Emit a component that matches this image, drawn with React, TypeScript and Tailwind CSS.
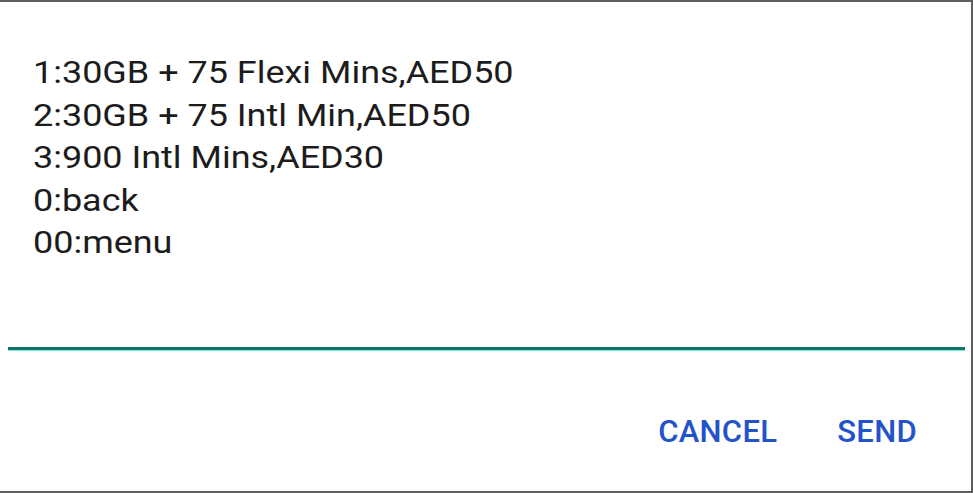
export default function App() {
  const lines = [
    '1:30GB + 75 Flexi Mins,AED50',
    '2:30GB + 75 Intl Min,AED50',
    '3:900 Intl Mins,AED30',
    '0:back',
    '00:menu',
  ];

  return (
    <div
      className="w-[973px] h-[493px] bg-white border-t-2 border-b-2 border-r-2 border-[#5f5f5f] overflow-hidden flex flex-col"
      style={{ fontFamily: 'Roboto, "Liberation Sans", sans-serif' }}
    >
      {/* USSD message */}
      <div className="pl-[33px] pt-[50px] text-[31px] leading-[42.5px] text-[#1c1c1c]">
        {lines.map((line) => (
          <div key={line} className="origin-left scale-x-[1.16] whitespace-nowrap">
            {line}
          </div>
        ))}
      </div>

      {/* Input underline */}
      <div className="ml-[8px] mr-[6px] mt-[82px] h-[4px] bg-[#11766a] border-b border-[#7fe3e0]" />

      {/* Actions */}
      <div className="flex justify-end items-center gap-[60px] pr-[54px] mt-[58px]">
        <button className="text-[31px] font-medium tracking-[0.3px] text-[#2453c9]">CANCEL</button>
        <button className="text-[31px] font-medium tracking-[0.3px] text-[#2453c9]">SEND</button>
      </div>
    </div>
  );
}
